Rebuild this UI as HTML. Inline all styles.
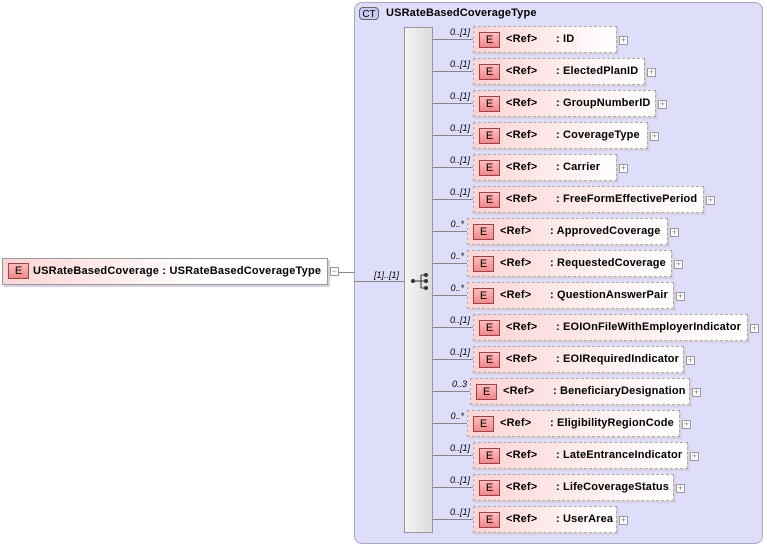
<!DOCTYPE html>
<html><head><meta charset="utf-8"><style>
body{margin:0;width:767px;height:548px;background:#fff;position:relative;overflow:hidden;font-family:"Liberation Sans",sans-serif;font-size:11px;color:#000}
.a{position:absolute}
.ct{left:354px;top:2px;width:409px;height:542px;border:1px solid #a8a8c0;border-radius:8px;background:#dedefa;box-sizing:border-box}
.ctb{left:359px;top:7px;width:20px;height:13px;border:1px solid #666;border-radius:4px;background:#c8c8f0;font-size:10px;line-height:13px;text-align:center;box-sizing:border-box}
.bar{left:404px;top:27px;width:29px;height:506px;background:linear-gradient(90deg,#f4f4f4,#dcdcdc);border:1px solid #999;box-sizing:border-box}
.el{height:27px;border:1px dashed #aaa;box-sizing:border-box;background:linear-gradient(90deg,#fcd4d4,#fff4f4 70%,#fff);box-shadow:2px 2px 0 #d8d0e0}
.eb{width:21px;height:16px;border:1px solid #944;background:linear-gradient(#fbb,#f08a8a);box-sizing:border-box;text-align:center;font-size:11px;line-height:14px}
.pl{width:9px;height:9px;border:1px solid #999;background:#fff;box-sizing:border-box;font-size:9px;line-height:7px;text-align:center;color:#888}
.ln{height:1px;background:#888}
.lb{font-size:9px;font-style:italic;text-align:right;width:40px}
.t{font-weight:bold;letter-spacing:0.15px}
</style></head><body>
<div class="a ct"></div>
<div class="a ctb">CT</div>
<div class="a t" style="left:386px;top:7px;font-size:11px">USRateBasedCoverageType</div>
<div class="a bar"></div>
<div class="a el" style="left:2px;top:258px;width:326px;border:1px solid #999;background:linear-gradient(90deg,#fcd4d4,#fff 60%)"></div>
<div class="a eb" style="left:8px;top:263px">E</div>
<div class="a t" style="left:33px;top:265px;letter-spacing:0.2px">USRateBasedCoverage : USRateBasedCoverageType</div>
<div class="a pl" style="left:330px;top:267px">−</div>
<div class="a ln" style="left:339px;top:272px;width:15px"></div>
<div class="a ln" style="left:354px;top:281px;width:50px"></div>
<div class="a" style="left:374px;top:270px;font-size:9px;font-style:italic">[1]..[1]</div>
<svg class="a" style="left:410px;top:272px" width="20" height="20" viewBox="0 0 20 20"><circle cx="3" cy="9" r="2" fill="#333"/><line x1="3" y1="9" x2="11" y2="9" stroke="#333"/><line x1="11" y1="3" x2="11" y2="16" stroke="#333"/><line x1="11" y1="3" x2="16" y2="3" stroke="#333"/><line x1="11" y1="16" x2="16" y2="16" stroke="#333"/><line x1="11" y1="9" x2="16" y2="9" stroke="#333"/><circle cx="16" cy="3" r="2" fill="#333"/><circle cx="16" cy="9" r="2" fill="#333"/><circle cx="16" cy="16" r="2" fill="#333"/></svg>
<div id="rows"></div>
<script>
var r=[["0..[1]",473,617,"ID"],["0..[1]",473,645,"ElectedPlanID"],["0..[1]",473,656,"GroupNumberID"],["0..[1]",473,648,"CoverageType"],["0..[1]",473,617,"Carrier"],["0..[1]",473,704,"FreeFormEffectivePeriod"],["0..*",467,668,"ApprovedCoverage"],["0..*",467,672,"RequestedCoverage"],["0..*",467,674,"QuestionAnswerPair"],["0..[1]",473,748,"EOIOnFileWithEmployerIndicator"],["0..[1]",473,684,"EOIRequiredIndicator"],["0..3",470,690,"BeneficiaryDesignation"],["0..*",467,680,"EligibilityRegionCode"],["0..[1]",473,688,"LateEntranceIndicator"],["0..[1]",473,674,"LifeCoverageStatus"],["0..[1]",473,617,"UserArea"]];
var h="";r.forEach(function(x,i){var t=26+32*i,c=t+13,l=x[1];
h+='<div class="a ln" style="left:433px;top:'+c+'px;width:'+(l-433)+'px"></div>';
h+='<div class="a lb" style="left:'+(l-43)+'px;top:'+(t+1)+'px">'+x[0]+'</div>';
h+='<div class="a el" style="left:'+l+'px;top:'+t+'px;width:'+(x[2]-l)+'px"></div>';
h+='<div class="a eb" style="left:'+(l+6)+'px;top:'+(t+6)+'px">E</div>';
h+='<div class="a t" style="left:'+(l+33)+'px;top:'+(t+7)+'px">&lt;Ref&gt;</div>';
h+='<div class="a t" style="left:'+(l+83)+'px;top:'+(t+7)+'px">: '+x[3]+'</div>';
h+='<div class="a pl" style="left:'+(x[2]+2)+'px;top:'+(t+10)+'px">+</div>';});
document.getElementById("rows").innerHTML=h;
</script>
</body></html>
